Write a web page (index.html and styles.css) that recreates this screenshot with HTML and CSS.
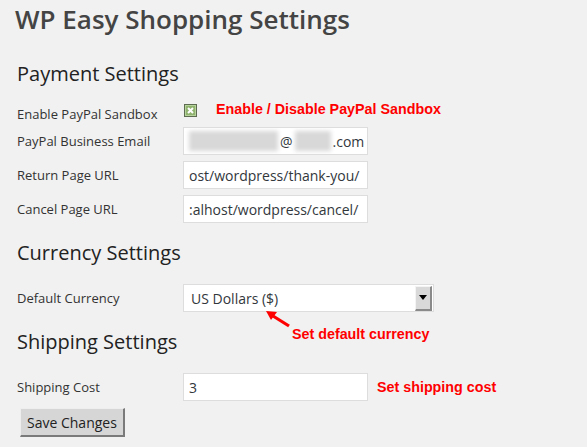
FILE: index.html
```html
<!DOCTYPE html>
<html lang="en">
<head>
  <meta charset="UTF-8" />
  <title>WP Easy Shopping Settings</title>
  <link rel="stylesheet" href="styles.css">
</head>
<body>

<div class="wrap">
  <h1 class="page-title">WP Easy Shopping Settings</h1>

  <h2 class="section-title first">Payment Settings</h2>

  <div class="field-row check-row">
    <label class="field-label">Enable PayPal Sandbox</label>
    <span class="checkbox">
      <svg width="13" height="13" viewBox="0 0 13 13">
        <rect x="0.5" y="0.5" width="12" height="12" fill="#9dbd7f" stroke="#5d6b50"/>
        <rect x="1.5" y="1.5" width="10" height="10" fill="#8fb26e" stroke="#b7d39c"/>
        <path d="M4 4 L9 9 M9 4 L4 9" stroke="#fff" stroke-width="2"/>
      </svg>
    </span>
    <span class="note note-check">Enable / Disable PayPal Sandbox</span>
  </div>

  <div class="field-row">
    <label class="field-label">PayPal Business Email</label>
    <div class="text-input email">
      <span class="blur blur-long"></span>
      <span>@</span>
      <span class="blur blur-short"></span>
      <span>.com</span>
    </div>
  </div>

  <div class="field-row">
    <label class="field-label">Return Page URL</label>
    <div class="text-input">ost/wordpress/thank-you/</div>
  </div>

  <div class="field-row">
    <label class="field-label">Cancel Page URL</label>
    <div class="text-input">:alhost/wordpress/cancel/</div>
  </div>

  <h2 class="section-title">Currency Settings</h2>

  <div class="field-row spaced">
    <label class="field-label">Default Currency</label>
    <div class="select-box">
      <span class="select-value">US Dollars ($)</span>
      <span class="select-button"><span class="arrow"></span></span>
    </div>
    <div class="callout">
      <svg class="callout-arrow" width="26" height="18" viewBox="0 0 26 18">
        <path d="M24 16 L8 6" stroke="#f00" stroke-width="3.2"/>
        <path d="M1 1 L12 2 L6 10 Z" fill="#f00"/>
      </svg>
      <span class="note">Set default currency</span>
    </div>
  </div>

  <h2 class="section-title">Shipping Settings</h2>

  <div class="field-row spaced">
    <label class="field-label">Shipping Cost</label>
    <div class="text-input">3</div>
    <span class="note note-shipping">Set shipping cost</span>
  </div>

  <button class="save-button">Save Changes</button>
</div>

</body>
</html>
```

FILE: styles.css
```css
* {
  margin: 0;
  padding: 0;
  box-sizing: border-box;
}

html, body {
  background: #f1f1f1;
  font-family: 'Open Sans', sans-serif;
  color: #222;
}

.wrap {
  padding-left: 17px;
}

.page-title {
  margin: 2px 0 0 -2px;
  font-size: 26px;
  line-height: 34px;
  font-weight: 600;
  color: #444;
}

.section-title {
  margin: 13px 0 10px;
  font-size: 20px;
  line-height: 28px;
  font-weight: 400;
  color: #222;
}

.section-title.first {
  margin-top: 24px;
}

.field-row {
  position: relative;
  display: flex;
  align-items: center;
  height: 34px;
}

/* collapses with the heading's bottom margin */
.field-row.spaced {
  margin-top: 14px;
}

.check-row {
  height: 26px;
}

.field-label {
  width: 166px;
  flex-shrink: 0;
  font-size: 13px;
  line-height: 20px;
  color: #333;
}

.check-row .field-label {
  padding-top: 5px;
}

.checkbox {
  display: flex;
  margin-left: 1px;
  margin-bottom: 1px;
}

.note {
  font-family: 'Liberation Sans', Arial, sans-serif;
  font-weight: bold;
  font-size: 14.3px;
  color: #f00;
  white-space: nowrap;
}

.note-check {
  margin-left: 19px;
  margin-bottom: 5px;
}

.note-shipping {
  margin-left: 9px;
  margin-bottom: 1px;
}

.text-input {
  display: flex;
  align-items: center;
  width: 185px;
  height: 28px;
  padding: 0 5px;
  background: #fff;
  border: 1px solid #ddd;
  font-size: 14px;
  color: #32373c;
  white-space: nowrap;
  overflow: hidden;
}

.email span {
  flex-shrink: 0;
}

.blur {
  display: inline-block;
  height: 20px;
  background: #d8d8d8;
  filter: blur(2px);
}

.blur-long {
  width: 89px;
  margin-right: 2px;
}

.blur-short {
  width: 36px;
  margin: 0 2px;
}

.select-box {
  display: flex;
  align-items: center;
  justify-content: space-between;
  width: 251px;
  height: 28px;
  padding: 0 1px 0 7px;
  background: #fff;
  border: 1px solid #ddd;
  font-size: 14px;
  color: #32373c;
}

.select-button {
  display: flex;
  align-items: center;
  justify-content: center;
  width: 17px;
  height: 25px;
  background: #d9d9d9;
  border-top: 1px solid #f4f4f4;
  border-left: 1px solid #f4f4f4;
  border-right: 2px solid #8a8a8a;
  border-bottom: 2px solid #8a8a8a;
}

.arrow {
  width: 0;
  height: 0;
  border-left: 4px solid transparent;
  border-right: 4px solid transparent;
  border-top: 5px solid #000;
}

.callout {
  position: absolute;
  left: 231px;
  top: 29px;
  display: flex;
  align-items: flex-start;
}

.callout-arrow {
  margin-left: 17px;
}

.callout .note {
  margin: 16px 0 0 1px;
}

.save-button {
  display: block;
  margin: 4px 0 0 3px;
  height: 29px;
  padding: 0 6px;
  background: #d6d6d6;
  border: none;
  border-top: 1px solid #eee;
  border-left: 1px solid #eee;
  border-right: 2px solid #7a7a7a;
  border-bottom: 2px solid #7a7a7a;
  font-family: 'Open Sans', sans-serif;
  font-size: 14px;
  color: #222;
}
```
